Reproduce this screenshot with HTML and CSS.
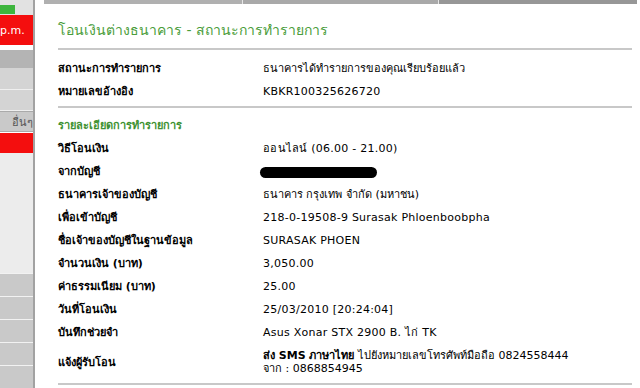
FILE: index.html
```html
<!DOCTYPE html>
<html lang="th">
<head>
<meta charset="utf-8">
<title>โอนเงินต่างธนาคาร - สถานะการทำรายการ</title>
<link rel="stylesheet" href="styles.css">
</head>
<body>
<div class="page">
  <aside class="sidebar">
    <div class="sb-top"><div class="sb-green"></div></div>
    <div class="sb-red sb-time">p.m.</div>
    <div class="sb-gap"></div>
    <div class="sb-dark"></div>
    <div class="sb-item"></div>
    <div class="sb-item"></div>
    <div class="sb-other">อื่นๆ</div>
    <div class="sb-red sb-active"></div>
    <div class="sb-fill"></div>
    <div class="sb-row"></div>
    <div class="sb-row"></div>
    <div class="sb-row"></div>
    <div class="sb-row"></div>
    <div class="sb-row"></div>
  </aside>
  <main class="main">
    <div class="topbar">
      <div class="tb tb-a"></div>
      <div class="tb tb-b"></div>
      <div class="tb tb-c"></div>
    </div>
    <div class="content">
      <h1 class="title">โอนเงินต่างธนาคาร - สถานะการทำรายการ</h1>
      <div class="rule"></div>
      <div class="section summary">
        <div class="row"><div class="label">สถานะการทำรายการ</div><div class="value thai">ธนาคารได้ทำรายการของคุณเรียบร้อยแล้ว</div></div>
        <div class="row"><div class="label">หมายเลขอ้างอิง</div><div class="value">KBKR100325626720</div></div>
      </div>
      <div class="rule rule-mid"></div>
      <div class="section details">
        <div class="row sub"><div class="label">รายละเอียดการทำรายการ</div></div>
        <div class="row"><div class="label">วิธีโอนเงิน</div><div class="value">ออนไลน์ (06.00 - 21.00)</div></div>
        <div class="row"><div class="label">จากบัญชี</div><div class="value"><span class="blob"></span></div></div>
        <div class="row"><div class="label">ธนาคารเจ้าของบัญชี</div><div class="value thai">ธนาคาร กรุงเทพ จำกัด (มหาชน)</div></div>
        <div class="row"><div class="label">เพื่อเข้าบัญชี</div><div class="value">218-0-19508-9 Surasak Phloenboobpha</div></div>
        <div class="row"><div class="label">ชื่อเจ้าของบัญชีในฐานข้อมูล</div><div class="value">SURASAK PHOEN</div></div>
        <div class="row"><div class="label">จำนวนเงิน (บาท)</div><div class="value">3,050.00</div></div>
        <div class="row"><div class="label">ค่าธรรมเนียม (บาท)</div><div class="value">25.00</div></div>
        <div class="row"><div class="label">วันที่โอนเงิน</div><div class="value">25/03/2010 [20:24:04]</div></div>
        <div class="row"><div class="label">บันทึกช่วยจำ</div><div class="value">Asus Xonar STX 2900 B. ไก่ TK</div></div>
        <div class="row row-multi"><div class="label">แจ้งผู้รับโอน</div><div class="value thai-mix"><b>ส่ง SMS ภาษาไทย</b> ไปยังหมายเลขโทรศัพท์มือถือ 0824558444<br>จาก : 0868854945</div></div>
      </div>
      <div class="rule rule-end"></div>
    </div>
  </main>
</div>
</body>
</html>
```
FILE: styles.css
```css
html, body {
  margin: 0;
  padding: 0;
  background: #ffffff;
}
body {
  font-family: "DejaVu Sans", "Noto Sans", sans-serif;
  font-size: 11px;
  color: #000;
}
.page {
  display: flex;
  width: 640px;
  height: 388px;
  overflow: hidden;
}
.sidebar {
  width: 33px;
  flex: none;
  border-right: 2px solid #a2a2a2;
  display: flex;
  flex-direction: column;
  overflow: hidden;
}
.sb-top {
  height: 16px;
  background: #e2e2e2;
  padding-top: 5px;
  box-sizing: border-box;
}
.sb-green {
  width: 15px;
  height: 9px;
  background: #3db53d;
}
.sb-red {
  background: #f40e0e;
}
.sb-time {
  height: 32px;
  line-height: 32px;
  color: #fff;
  font-size: 11px;
  white-space: nowrap;
  overflow: hidden;
}
.sb-gap {
  height: 5px;
  background: #fff;
}
.sb-dark {
  height: 20px;
  background: #b4b4b4;
}
.sb-item {
  height: 22px;
  background: #d4d4d4;
  border-bottom: 1px solid #efefef;
}
.sb-other {
  height: 20px;
  line-height: 22px;
  background: #c9c9c9;
  border-top: 1px solid #aaaaaa;
  border-bottom: 1px solid #aaaaaa;
  color: #555;
  font-size: 11px;
  text-align: right;
  white-space: nowrap;
  direction: rtl;
  overflow: hidden;
}
.sb-active {
  height: 22px;
  margin-top: 1px;
}
.sb-fill {
  height: 129px;
  background: #ececec;
}
.sb-row {
  height: 22px;
  flex: none;
  background: #c9c9c9;
  border-top: 1px solid #f2f2f2;
}
.main {
  flex: 1;
  min-width: 0;
}
.topbar {
  display: flex;
  height: 4px;
  margin-left: 9px;
  width: 593px;
}
.tb {
  height: 4px;
}
.tb-a {
  width: 198px;
  background: #b0b0b0;
  border-right: 1px solid #e6e6e6;
}
.tb-b {
  width: 195px;
  background: #a9a9a9;
  border-right: 1px solid #e6e6e6;
}
.tb-c {
  flex: 1;
  background: #979797;
}
.content {
  padding: 0 8px 0 23px;
}
.title {
  margin: 16px 0 8px 0;
  height: 20px;
  line-height: 20px;
  font-size: 14px;
  font-weight: normal;
  color: #4a9d3a;
  white-space: nowrap;
}
.rule {
  height: 2px;
  background: #c8c8c8;
}
.rule-mid {
  margin-top: 3px;
}
.rule-end {
  margin-top: 8px;
}
.summary {
  padding-top: 7px;
}
.details {
  padding-top: 6px;
}
.row {
  display: grid;
  grid-template-columns: 205px 1fr;
  height: 23px;
  line-height: 23px;
  white-space: nowrap;
}
.label {
  font-weight: bold;
}
.sub .label {
  color: #3f9233;
}
.value {
  letter-spacing: 0.25px;
}
.value.thai {
  letter-spacing: 0;
}
.value.thai-mix {
  letter-spacing: 0;
}
.value b {
  font-weight: bold;
}
.row-multi {
  height: auto;
  padding-top: 5px;
  align-items: center;
}
.row-multi .value {
  line-height: 13px;
}
.blob {
  display: inline-block;
  width: 117px;
  height: 11px;
  margin-left: -3px;
  background: #000;
  border-radius: 6px;
  vertical-align: middle;
}
```
